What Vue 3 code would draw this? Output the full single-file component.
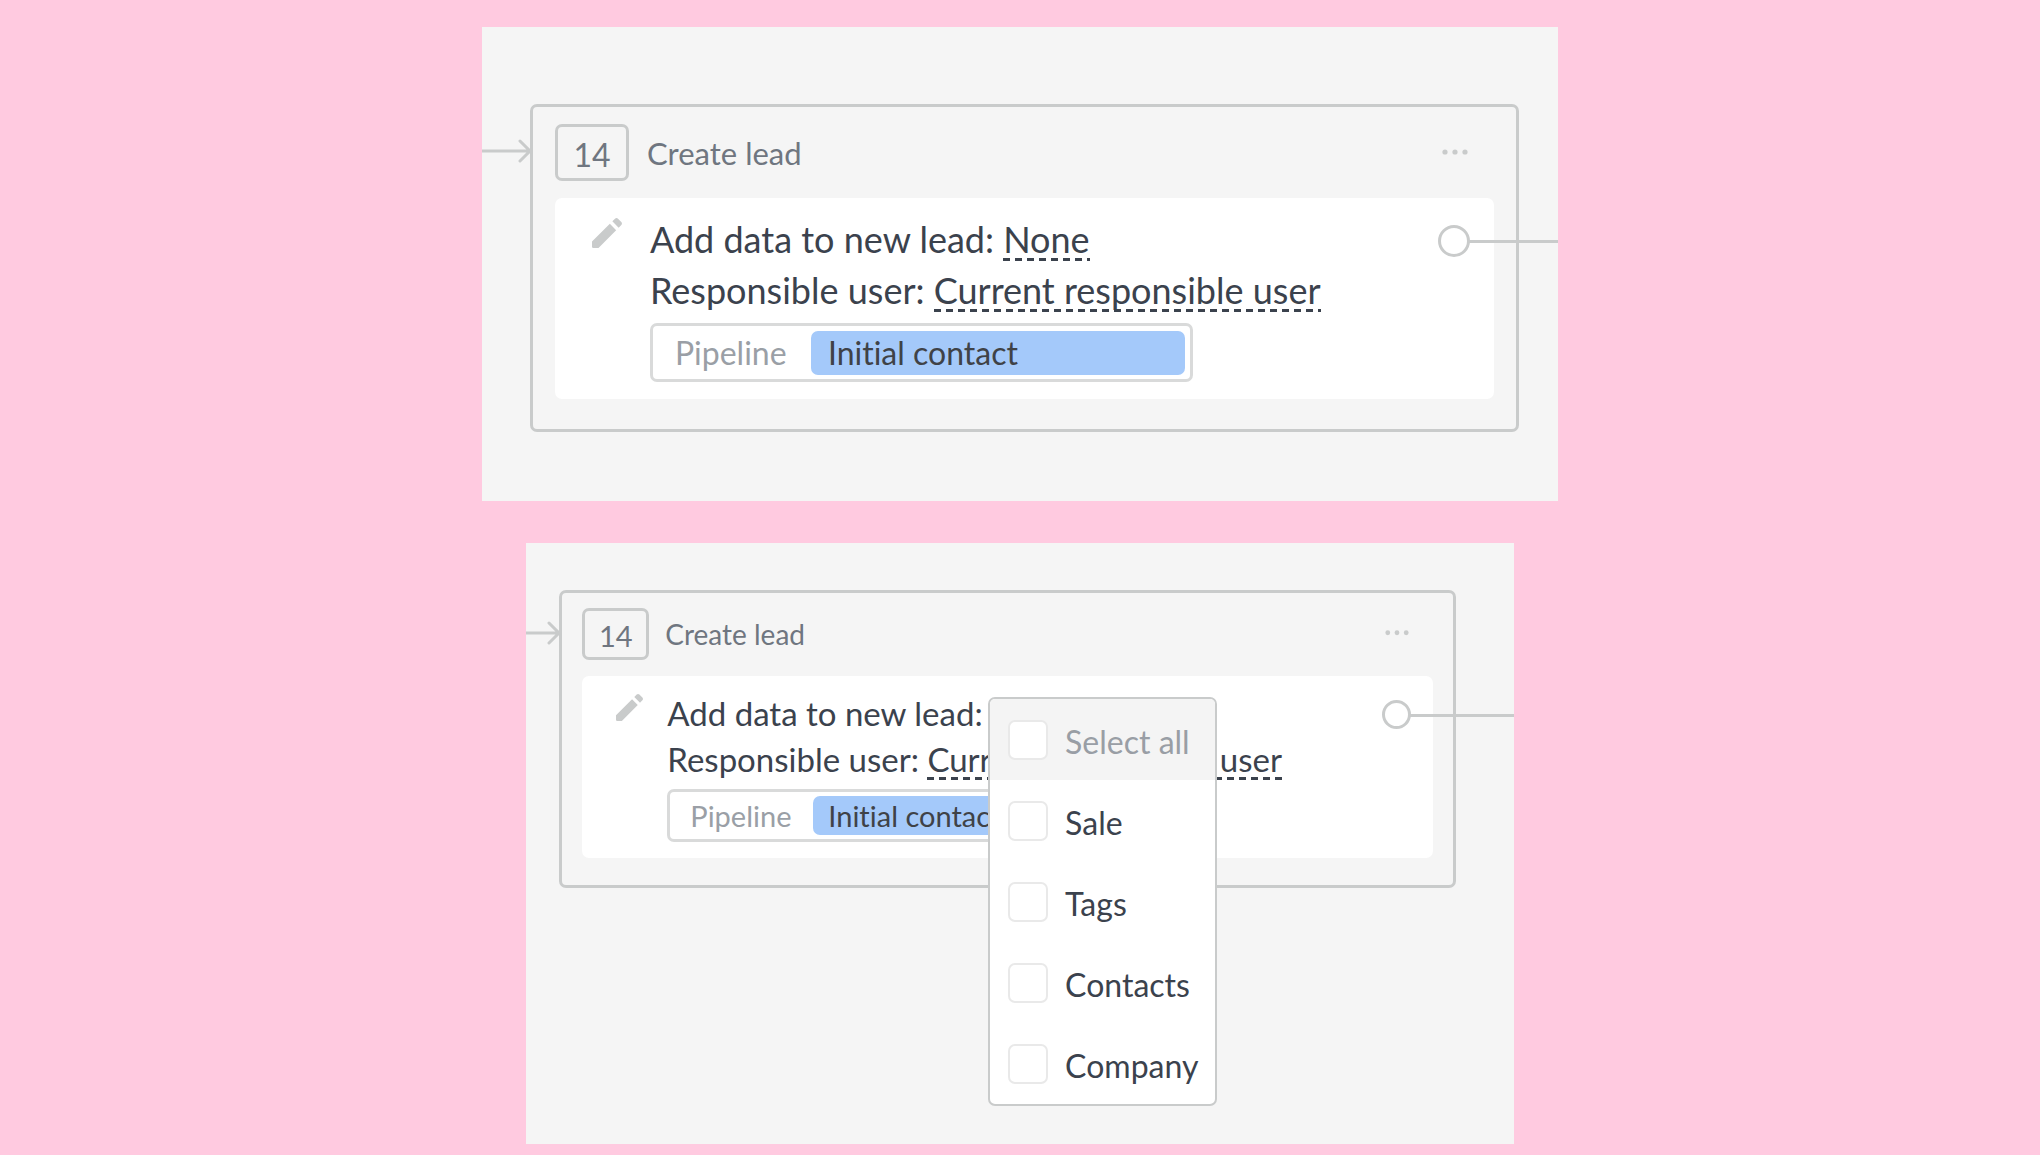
<script setup>
import { ref } from 'vue'

const steps = ref([
  { id: 'overview', size: 'large', number: 14, menuOpen: false },
  { id: 'editing', size: 'medium', number: 14, menuOpen: true },
])

const options = ref([
  { id: 'all', label: 'Select all', checked: false },
  { id: 'sale', label: 'Sale', checked: false },
  { id: 'tags', label: 'Tags', checked: false },
  { id: 'contacts', label: 'Contacts', checked: false },
  { id: 'company', label: 'Company', checked: false },
])
</script>

<template>
  <main class="page">
    <section v-for="step in steps" :key="step.id" class="panel" :class="step.size">
      <article class="card">
        <svg class="arrow" viewBox="0 0 52 24" preserveAspectRatio="xMaxYMid slice" aria-hidden="true">
          <path d="M0 12H49M39 2L49 12L39 22" />
        </svg>
        <header class="head">
          <span class="number">{{ step.number }}</span>
          <h2 class="title">Create lead</h2>
          <button class="more" type="button" aria-label="More actions">
            <svg viewBox="0 0 26 6" aria-hidden="true">
              <circle cx="3" cy="3" r="2.6" />
              <circle cx="13" cy="3" r="2.6" />
              <circle cx="23" cy="3" r="2.6" />
            </svg>
          </button>
        </header>
        <div class="body">
          <svg class="pencil" viewBox="3 3 18 18" aria-hidden="true">
            <path d="M3 17.1V20.2q0 .8.8.8H6.9L17.5 10.3l-3.8-3.8L3 17.1zM20.6 7.2c.5-.5.5-1.3 0-1.8l-2-2c-.5-.5-1.3-.5-1.8 0l-1.6 1.6 3.8 3.8 1.6-1.6z" />
          </svg>
          <div class="fields">
            <div class="line">
              Add data to new lead:
              <span class="anchor">
                <button class="link" type="button">None</button>
                <span v-if="step.menuOpen" class="menu">
                  <label v-for="option in options" :key="option.id" class="option">
                    <input v-model="option.checked" type="checkbox" />
                    <span>{{ option.label }}</span>
                  </label>
                </span>
              </span>
            </div>
            <div class="line">
              Responsible user:
              <button class="link" type="button">Current responsible user</button>
            </div>
            <button class="pipeline" type="button">
              <span class="pipeline-name">Pipeline</span>
              <span class="stage">Initial contact</span>
            </button>
          </div>
          <span class="port"></span>
        </div>
      </article>
    </section>
  </main>
</template>

<style>
body {
  margin: 0;
  background: #ffcae0;
}
</style>

<style scoped>
.page {
  box-sizing: border-box;
  min-height: 100vh;
  padding: 27px 0 12px;
  display: flex;
  flex-direction: column;
  align-items: center;
  gap: 42px;
  background: #ffcae0;
  color: #3b424d;
  font-family: Lato, "Open Sans", sans-serif;
  font-variant-ligatures: none;
}
.page * {
  box-sizing: border-box;
}
.panel {
  background: #f5f5f5;
}
.large {
  --text: 36px;
  --small: 32px;
  --title: 31px;
  --row: 51px;
  --inset: 22px;
  --badge-w: 74px;
  --badge-h: 57px;
  --head-gap: 17px;
  --title-gap: 18px;
  --more-w: 26px;
  --more-right: 26px;
  --body-pad: 16px 24px 17px 37px;
  --pencil: 30px;
  --pencil-gap: 28px;
  --box-w: 543px;
  --box-h: 59px;
  --box-gap: 7px;
  --stage-w: 374px;
  --port: 32px;
  --port-line: 91px;
  --port-top: 11px;
  --arrow-w: 51px;
  --arrow-top: 32px;
  --foot: 30px;
  width: 52.75%;
  max-width: calc(100% - 40px);
  padding: 77px 39px 69px 48px;
}
.medium {
  --text: 33px;
  --small: 29px;
  --title: 28px;
  --row: 46px;
  --inset: 20px;
  --badge-w: 67px;
  --badge-h: 52px;
  --head-gap: 16px;
  --title-gap: 16px;
  --more-w: 24px;
  --more-right: 24px;
  --body-pad: 14px 22px 16px 34px;
  --pencil: 27px;
  --pencil-gap: 24px;
  --box-w: 491px;
  --box-h: 53px;
  --box-gap: 7px;
  --stage-w: 337px;
  --port: 29px;
  --port-line: 106px;
  --port-top: 10px;
  --arrow-w: 36px;
  --arrow-top: 28px;
  --foot: 27px;
  width: 48.4%;
  max-width: calc(100% - 40px);
  padding: 47px 58px 256px 33px;
}
.card {
  position: relative;
  padding: 17px var(--inset) var(--foot);
  border: 3px solid #c9cbcb;
  border-radius: 7px;
}
.medium .card {
  padding-top: 15px;
}
.arrow {
  position: absolute;
  right: 100%;
  top: var(--arrow-top);
  width: var(--arrow-w);
  height: 24px;
  fill: none;
  stroke: #c9cbcb;
  stroke-width: 3;
  stroke-linecap: round;
}
.head {
  display: flex;
  align-items: center;
  margin-bottom: var(--head-gap);
  color: #6f7680;
  font-size: var(--small);
}
.number {
  width: var(--badge-w);
  height: var(--badge-h);
  padding-top: 3px;
  display: flex;
  align-items: center;
  justify-content: center;
  border: 3px solid #c9cbcb;
  border-radius: 7px;
}
.title {
  flex: 1;
  margin: 0 0 0 var(--title-gap);
  font-size: var(--title);
  font-weight: 400;
}
.more {
  width: var(--more-w);
  margin-right: var(--more-right);
  padding: 0 0 2px;
  border: 0;
  background: none;
}
.more svg {
  display: block;
  fill: #c9cbcb;
}
.body {
  display: flex;
  align-items: flex-start;
  padding: var(--body-pad);
  border-radius: 7px;
  background: #fff;
}
.pencil {
  flex: none;
  width: var(--pencil);
  height: var(--pencil);
  margin-top: 4px;
  margin-right: var(--pencil-gap);
  fill: #c9cbcb;
}
.fields {
  flex: 1;
  min-width: 0;
}
.line {
  height: var(--row);
  font-size: var(--text);
  line-height: var(--row);
  white-space: nowrap;
}
.anchor {
  position: relative;
}
.link {
  padding: 0 0 4px;
  border: 0;
  background: repeating-linear-gradient(90deg, #3b424d 0 7px, transparent 7px 12px) left bottom / 100% 3px no-repeat;
  color: inherit;
  font: inherit;
  line-height: var(--text);
}
.pipeline {
  width: var(--box-w);
  height: var(--box-h);
  max-width: 100%;
  margin-top: var(--box-gap);
  padding: 0 5px 0 22px;
  display: flex;
  align-items: center;
  justify-content: space-between;
  border: 3px solid #d9dada;
  border-radius: 7px;
  background: #fff;
  color: #9a9fa6;
  font: inherit;
  font-size: var(--small);
}
.medium .pipeline {
  padding-left: 20px;
}
.stage {
  width: var(--stage-w);
  padding-left: 17px;
  border-radius: 7px;
  background: #a4c9fa;
  color: #3f4247;
  line-height: 44px;
  text-align: left;
}
.medium .stage {
  padding-left: 15px;
  line-height: 39px;
}
.port {
  position: relative;
  flex: none;
  width: var(--port);
  height: var(--port);
  margin-top: var(--port-top);
  border: 3px solid #c9cbcb;
  border-radius: 50%;
}
.port::after {
  content: "";
  position: absolute;
  left: 100%;
  top: 50%;
  width: var(--port-line);
  height: 3px;
  margin-top: -1px;
  background: #c9cbcb;
}
.menu {
  position: absolute;
  z-index: 1;
  top: 4px;
  left: -3px;
  width: 229px;
  display: flex;
  flex-direction: column;
  overflow: hidden;
  border: 2px solid #c9cbcb;
  border-radius: 7px;
  background: #fff;
  font-size: 32px;
}
.option {
  height: 81px;
  padding: 0 0 0 18px;
  display: flex;
  align-items: center;
  gap: 17px;
  line-height: 40px;
}
.option:first-child {
  background: #f4f4f4;
  color: #999ea5;
}
.option input {
  appearance: none;
  flex: none;
  width: 40px;
  height: 40px;
  margin: 0;
  border: 2px solid #e9e9e9;
  border-radius: 7px;
  background: #fff;
}
.option span {
  padding-top: 5px;
}
</style>
